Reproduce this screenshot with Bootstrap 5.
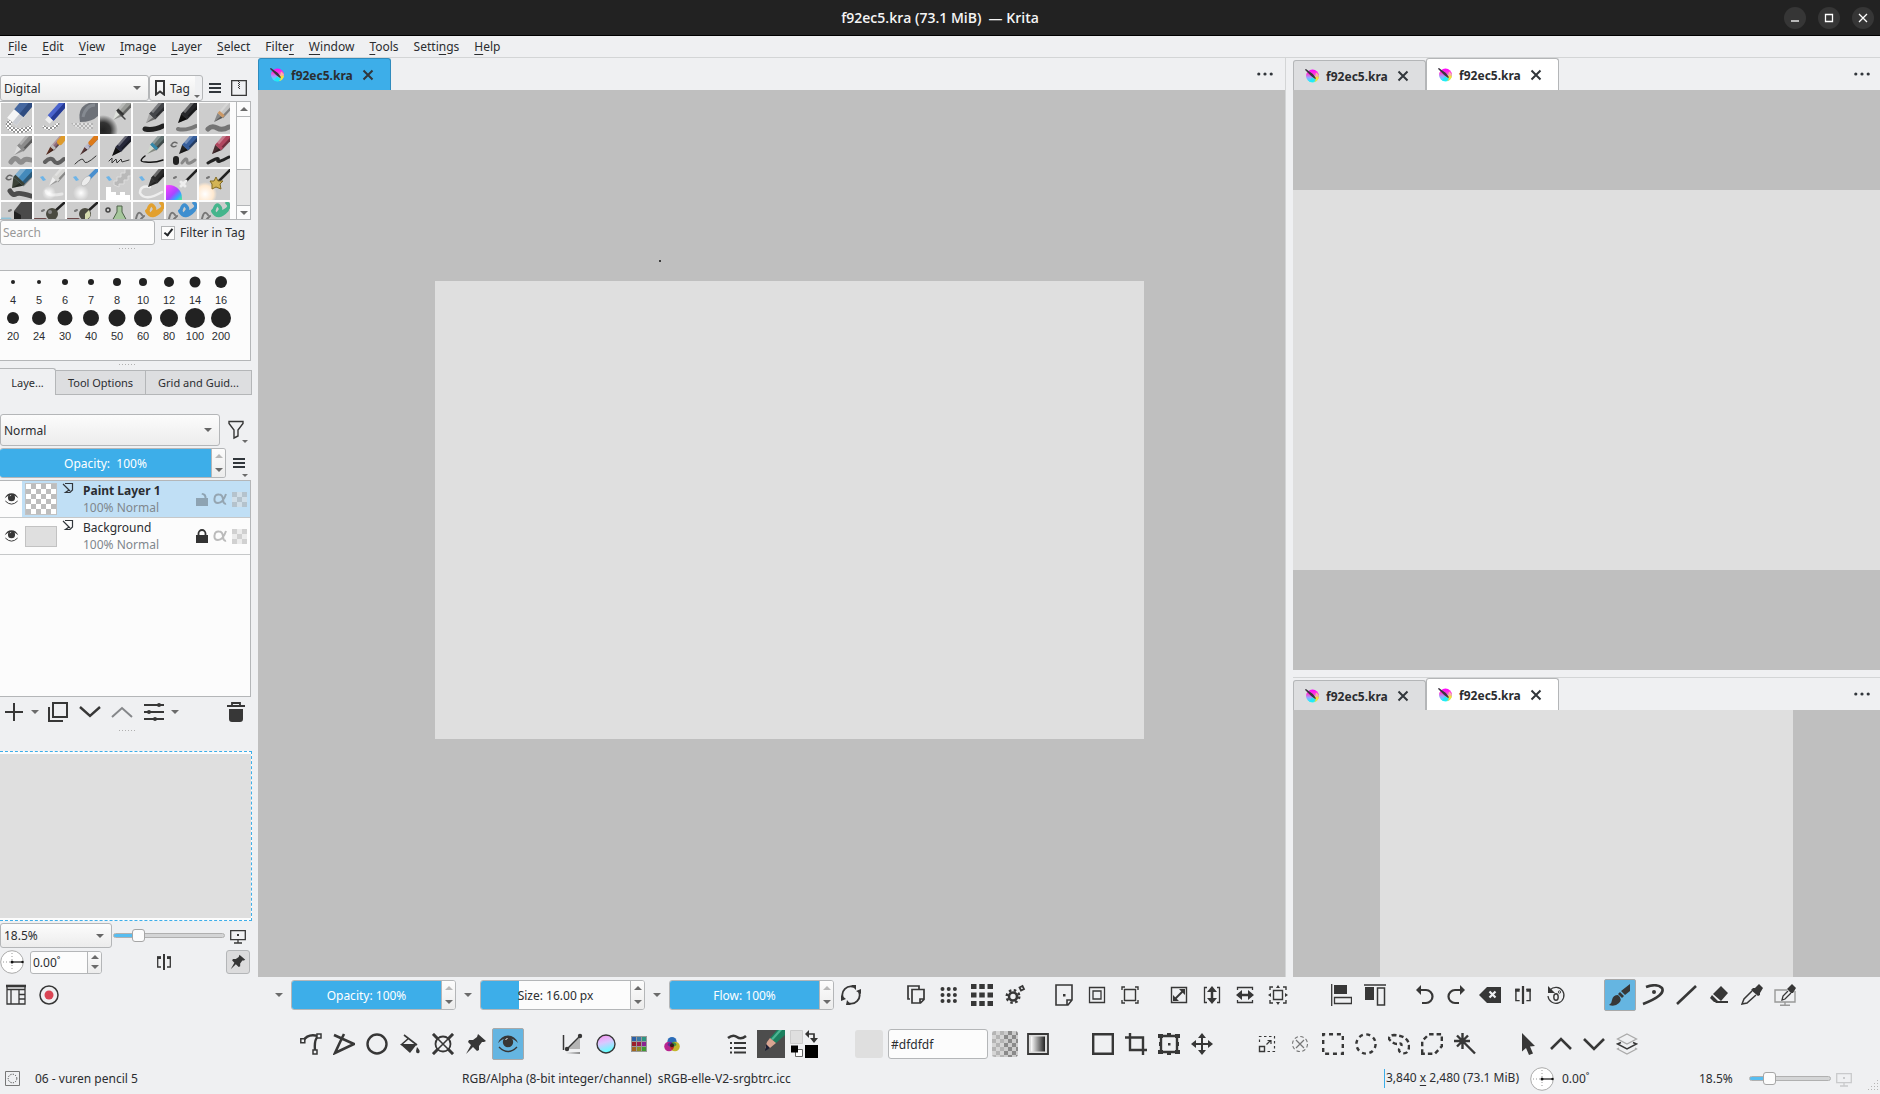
<!DOCTYPE html>
<html lang="en">
<head>
<meta charset="utf-8">
<meta name="viewport" content="width=device-width, initial-scale=1">
<title>f92ec5.kra (73.1 MiB) — Krita</title>
<link href="https://cdn.jsdelivr.net/npm/bootstrap@5.3.0/dist/css/bootstrap.min.css" rel="stylesheet">
<style>
:root{--ink:#373737;--line:#b4b6b8;--face:#eff0f2;--blue:#3daee9;--sel:#65b5e1}
body{font:12px/17px "Noto Sans",sans-serif;color:#2b2d30;background:var(--face);overflow:hidden}
svg{display:block;flex:none}
button,select,input{font:inherit;color:inherit}
.ico{width:22px;height:22px;fill:none;stroke:var(--ink);stroke-width:2}
.f{fill:var(--ink);stroke:none}
.plainbtn{background:none;border:0;padding:0;display:flex;align-items:center;justify-content:center;color:var(--ink)}
/* title and menu */
.titlebar{height:36px;background:#222;border-bottom:1px solid #000;color:#f4f4f4;display:grid;grid-template-columns:1fr auto 1fr}
.titlebar h1{font:600 14px/34px "Open Sans",sans-serif;margin:0;white-space:pre}
.winbtns{gap:12px;padding-right:6px}
.winbtn{width:22px;height:22px;border-radius:50%;background:#363636;border:0;padding:0}
.winbtn svg{stroke:#fff;fill:none;width:22px;height:22px;stroke-width:1.3}
.menubar{height:22px;border-bottom:1px solid #d3d5d6}
.menubar a{color:inherit;text-decoration:none;padding:0 8px;line-height:22px}
.menubar a+a{margin-left:-1px}
.menubar u,.statusbar u{text-underline-offset:3px}
/* controls */
.combo{height:26px;border:1px solid var(--line);border-radius:3px;padding:0 20px 0 3px;appearance:none;background:url("data:image/svg+xml,%3Csvg xmlns='http://www.w3.org/2000/svg' width='8' height='4'%3E%3Cpath d='M0 0h8L4 4z' fill='%23666'/%3E%3C/svg%3E") no-repeat right 7px center,linear-gradient(#fcfcfc,#ececec)}
.txt{border:1px solid var(--line);border-radius:3px;background:#fcfcfc;padding:0 2px;min-width:0}
.txt::placeholder{color:#999}
.spin{display:flex;border:1px solid var(--line);border-radius:3px;overflow:hidden;background:#fcfcfc}
.spin input{border:0;min-width:0;flex:1;background:none;padding:0}
.spin .filled{background:var(--blue);color:#fff;text-align:center}
.spin .sizefill{background:linear-gradient(90deg,var(--blue) 38px,#fcfcfc 38px);text-align:center}
.arrows{width:14px;flex:none;border-left:1px solid var(--line);background:linear-gradient(#fcfcfc,#ececec);display:flex;flex-direction:column}
.arrows button{flex:1;border:0;padding:0;background:none;display:flex;align-items:center;justify-content:center}
.arrows svg,.tri{width:8px;height:4px;fill:#6b6b6b}
.arrows .off svg{fill:#b8b8b8}
.tick{appearance:none;width:14px;height:14px;border:1px solid var(--line);background:#fcfcfc;margin:0;display:flex;align-items:center;justify-content:center}
.tick:checked::after{content:"";width:5px;height:9px;border:solid #232629;border-width:0 2px 2px 0;transform:rotate(38deg);margin-top:-2px}
.slide{appearance:none;height:13px;margin:0;background:none}
.slide::-webkit-slider-runnable-track{height:5px;border:1px solid #b0b0b0;border-radius:3px;background:linear-gradient(90deg,#57bdf0 24%,#d4d5d6 24%)}
.slide::-webkit-slider-thumb{appearance:none;width:13px;height:13px;margin-top:-5px;border:1px solid #a6a6a6;border-radius:3px;background:#fcfcfc}
.grip{height:3px;width:17px;margin:0 auto;background:radial-gradient(circle,#b0b0b0 1px,transparent 1px) 0 0/3px 3px}
/* left dock */
.dock{width:258px;flex:none;padding-right:6px}
.presetbox{width:251px;height:119px;border:1px solid var(--line);border-left:0;background:#fcfcfc;overflow:hidden}
.presets{display:grid;grid-template-columns:repeat(7,31px);gap:2px;padding:1px;flex:1;align-content:start}
.presets button{border:0;padding:0;width:31px;height:31px;background:#cdcdcd;overflow:hidden}
.presets svg{width:31px;height:31px;fill:none}
.vbar{width:14px;border-left:1px solid var(--line);background:#e6e6e6;display:flex;flex-direction:column}
.vbar button{height:14px;border:0;padding:0;background:#fcfcfc;display:flex;align-items:center;justify-content:center}
.vbar .knob{height:54px;border:solid var(--line);border-width:1px 0;background:#fcfcfc}
.vbar .down{border-top:1px solid var(--line)}
.sizes{width:251px;height:91px;border:1px solid var(--line);border-left:0;background:#fcfcfc;display:grid;grid-template-columns:repeat(9,26px);grid-auto-rows:36px;font:11px/12px "Liberation Sans",sans-serif;text-align:center}
.sizes button{border:0;background:none;padding:0;color:inherit;display:flex;flex-direction:column;align-items:center}
.sizes svg{width:22px;height:22px;fill:#222}
.docktabs{font-size:11px;height:27px;align-items:flex-end}
.docktabs button{height:25px;background:#dddee0;border:1px solid var(--line);border-left:0;padding:0;color:inherit}
.docktabs .on{height:27px;background:var(--face);border-left:0;border-bottom:0;border-radius:0 3px 0 0}
.layers{width:251px;border:1px solid var(--line);border-left:0;background:#fcfcfc}
.layer{height:37px;border-bottom:1px solid #c6c8c9}
.layer.on .rowbody{background:#c0dff5}
.eyecell{width:22px}
.thumbcell{width:32px;height:32px;border:1px solid #c2c2c2;background:repeating-conic-gradient(#bdbdbd 0 25%,#fff 0 50%) 0 0/10px 10px}
.thumbcell.plain{height:21px;background:#dfdfdf}
.soft{color:#7f878d}
.minicheck{width:15px;height:15px;background:repeating-conic-gradient(#aaa8 0 25%,#ddd8 0 50%) 5px 0/10px 10px}
.overview{width:252px;border:1px dashed var(--blue);border-left:0;padding:2px 0;background:#fcfcfc}
.overview div{background:#dfdfdf;height:100%}
.dial{width:24px;height:24px;fill:#fff;stroke:#aaa}
.pinbtn{width:24px;height:24px;border:1px solid var(--line);border-radius:3px;background:#dcdcdd}
/* document panes */
.docs{background:var(--face)}
.pane{min-width:0;min-height:0;display:flex;flex-direction:column}
.pane-a{flex:7 1 0}
.rightcol{flex:4 1 0;min-width:0;margin-left:7px}
.pane-a{border-right:1px solid #d3d5d6}
.pane-b{flex:43 1 0}.pane-c{flex:21 1 0}
.split{height:8px;border-bottom:1px solid #d3d5d6}
.tabrow{height:32px;display:flex;align-items:flex-end}
.doctab{width:133px;height:30px;background:#dddee0;border:1px solid var(--line);border-bottom:0;border-radius:3px 3px 0 0;padding:1px 0 0 10px;font-weight:700;display:flex;align-items:center}
.doctab.on{height:32px;background:#fff}
.doctab.focus{background:var(--blue);border-color:#2f8bbd}
.doctab span{margin-left:6px;width:71px}
.dots{margin-left:auto;width:36px;height:32px}
.canvas{background:#bfbfbf;flex:1;position:relative;min-height:0}
.sheet{background:#dfdfdf;height:100%}
.canvas-a{padding:191px 141px 238px 177px}
.canvas-b{padding:100px 0}
.canvas-c{padding:0 87px}
.speck{position:absolute;left:401px;top:170px;width:2px;height:2px;background:#3c3c3c}
/* bottom bars */
.tools{display:flex;align-items:center;height:36px}
.tb{width:33px;height:32px;flex:none}
.tb.on{width:32px;background:var(--sel);border:1px solid #a9a9a9;border-radius:2px}
.tool-arrow{width:24px;height:30px;flex:none}
.tools .spin{width:165px;height:30px;flex:none}
.g1{margin-left:16px}.g2{margin-left:32px}.g3{margin-left:30px}
.swatch{width:28px;height:28px;background:#dfdfdf;border:0;border-radius:3px}
.hexbox{width:100px;height:30px}
.statusbar{height:31px;display:flex;align-items:center}
.dimsbox{border-left:1px solid var(--blue);height:19px;padding-left:1px;width:146px;line-height:18px}
</style>
</head>
<body class="vh-100 d-flex flex-column">
<svg width="0" height="0" class="position-absolute">
<defs>
<linearGradient id="kr" x1="0" y1="0" x2="0" y2="1"><stop offset="0" stop-color="#f0f"/><stop offset=".35" stop-color="#ff3fd8"/><stop offset=".6" stop-color="#9fa0ff"/><stop offset="1" stop-color="#1ff"/></linearGradient>
<linearGradient id="wheel" x1="0" y1="0" x2=".3" y2="1"><stop offset="0" stop-color="#ff8cf0"/><stop offset=".5" stop-color="#d9c8ff"/><stop offset="1" stop-color="#6ff"/></linearGradient>
<linearGradient id="bw"><stop offset="0" stop-color="#fff"/><stop offset="1" stop-color="#222"/></linearGradient>
<linearGradient id="fadeb"><stop offset="0" stop-color="#222" stop-opacity="0"/><stop offset="1" stop-color="#222"/></linearGradient>
<linearGradient id="rain" x1="0" y1="0" x2="1" y2="1"><stop offset=".2" stop-color="#f4f"/><stop offset=".5" stop-color="#a4f"/><stop offset=".65" stop-color="#3af"/><stop offset=".78" stop-color="#5e8"/><stop offset=".9" stop-color="#fd4"/></linearGradient>
<radialGradient id="dark"><stop offset="0" stop-color="#222"/><stop offset=".5" stop-color="#333"/><stop offset="1" stop-color="#333" stop-opacity="0"/></radialGradient>
<radialGradient id="cream"><stop offset="0" stop-color="#fff"/><stop offset=".7" stop-color="#ffe9d0"/><stop offset="1" stop-color="#ffe9d0" stop-opacity="0"/></radialGradient>
<radialGradient id="mist"><stop offset="0" stop-color="#fff"/><stop offset="1" stop-color="#fff" stop-opacity="0"/></radialGradient>
<pattern id="chk" width="4" height="4" patternUnits="userSpaceOnUse"><rect width="4" height="4" fill="#fff"/><path d="M0 0h2v2h-2zM2 2h2v2h-2z" fill="#8f8f8f"/></pattern>
<pattern id="chk8" width="8" height="8" patternUnits="userSpaceOnUse"><rect width="8" height="8" fill="#ccc"/><path d="M0 0h4v4h-4zM4 4h4v4h-4z" fill="#8a8a8a"/></pattern>
<symbol id="kra" viewBox="0 0 16 16"><circle cx="8.500" cy="8" r="6.500" fill="url(#kr)"/><path d="M9 8 15 8.500A6.500 6.500 0 0 1 10.500 14z" fill="#f7e23a"/><path d="M12 4.500A6.500 6.500 0 0 1 15 8L11 9z" fill="#ffb0a0"/><path d="M5 13.500c3 1 6 .5 7-2l-4-2z" fill="#22e8f5"/><path d="M1.500 1.500l7 5 3 4-4-3z" fill="#3b3440" stroke="#3b3440" stroke-width="1.200"/></symbol>
<symbol id="cross" viewBox="0 0 12 12"><path d="M1.500 1.500l9 9M10.500 1.500l-9 9" stroke="#31363b" stroke-width="2"/></symbol>
<symbol id="up" viewBox="0 0 8 4"><path d="M0 4h8L4 0z"/></symbol>
<symbol id="dn" viewBox="0 0 8 4"><path d="M0 0h8L4 4z"/></symbol>
<symbol id="more" viewBox="0 0 16 4"><g fill="#31363b"><circle cx="1.800" cy="2" r="1.600"/><circle cx="8" cy="2" r="1.600"/><circle cx="14.200" cy="2" r="1.600"/></g></symbol>
<symbol id="burger" viewBox="0 0 12 12"><path d="M0 2h12M0 6h12M0 10h12" stroke="#31363b" stroke-width="2"/></symbol>
<symbol id="eye" viewBox="0 0 22 22"><path d="M1 10Q4 2.500 11 2.500T21 10Q16 5 11 5T1 10z" class="f"/><circle cx="11" cy="9" r="5.200" class="f"/><path d="M2 14q9 9 18 0" stroke-width="1.400"/><path d="M8.500 6.500l2-1" stroke="#fff" stroke-width="1"/></symbol>
<symbol id="mon" viewBox="0 0 16 16"><path d="M.7 2.700h14.600v9H.7zM8 12v3M4 15h8" stroke-width="1.300"/><path class="f" d="M7 6h2v2H7z"/></symbol>
<symbol id="pin" viewBox="0 0 22 22"><path class="f" d="M13 1l8 7-2 1-2 0-3 4 0 4-2 1-4-4-7 7 5-9-3-3 1-2 4 0 4-3z"/></symbol>
<symbol id="flip" viewBox="0 0 16 16"><path d="M5 3H1.700v10H5M11 3h3.300v10H11" stroke-width="1.300"/><path d="M8 0v16" stroke-width="2"/><path class="f" d="M11 2.400h4v2.600h-4zM1 2.400h4v2.600H1z"/></symbol>
<symbol id="dial" viewBox="0 0 24 24"><circle cx="12" cy="12" r="11.300"/><path d="M12 3v18M3 12h9" stroke-dasharray="1 2" stroke="#999"/><path d="M12 12h11" stroke="#111" stroke-width="1.200"/><circle cx="12" cy="12" r="1.500" fill="#111" stroke="none"/><circle cx="22.500" cy="12" r="1.200" fill="#111" stroke="none"/></symbol>
<symbol id="ltype" viewBox="0 0 12 12"><path d="M3 1.500h7.500V8L8 10.500H3.500L7 8M1 2l7 7" stroke="#31363b" stroke-width="1.200" fill="none"/></symbol>
</defs></svg>

<header class="titlebar align-items-center">
 <span></span><h1>f92ec5.kra (73.1 MiB)  — Krita</h1>
 <div class="winbtns d-flex justify-content-end">
  <button class="winbtn" aria-label="Minimize"><svg><path d="M7 14h8"/></svg></button>
  <button class="winbtn" aria-label="Maximize"><svg><path d="M7.500 7.500h7v7h-7z"/></svg></button>
  <button class="winbtn" aria-label="Close"><svg><path d="M7 7l8 8M15 7l-8 8"/></svg></button>
 </div>
</header>
<nav class="menubar d-flex" aria-label="Menu">
 <a href="#"><u>F</u>ile</a><a href="#"><u>E</u>dit</a><a href="#"><u>V</u>iew</a><a href="#"><u>I</u>mage</a><a href="#"><u>L</u>ayer</a><a href="#"><u>S</u>elect</a><a href="#">Filte<u>r</u></a><a href="#"><u>W</u>indow</a><a href="#"><u>T</u>ools</a><a href="#">Setti<u>n</u>gs</a><a href="#"><u>H</u>elp</a>
</nav>

<main class="d-flex flex-grow-1" style="min-height:0">
<aside class="dock d-flex flex-column">
 <div class="d-flex align-items-center" style="padding-top:17px">
  <select class="combo" style="width:149px" aria-label="Brush tag"><option>Digital</option></select>
  <button class="combo d-flex align-items-center position-relative" style="width:54px;padding:0 5px;background-image:linear-gradient(#fcfcfc,#ececec)"><svg width="10" height="16" viewBox="0 0 10 16" fill="none" stroke="#373737" stroke-width="2"><path d="M1 1h8v13.500l-4-3-4 3z"/></svg><span style="margin-left:5px">Tag</span><svg class="position-absolute" style="right:2px;bottom:2px" width="6" height="3" fill="#6b6b6b"><path d="M0 0h6L3 3z"/></svg></button>
  <button class="plainbtn" style="width:24px" aria-label="View options"><svg width="12" height="12"><use href="#burger"/></svg></button>
  <button class="plainbtn" style="margin-left:4px" aria-label="Storage"><svg width="16" height="16" fill="none" stroke="#373737" stroke-width="1.300"><path d="M.7.700h14.600v14.600H.7z"/><path d="M7.500 1v8M8.500 2v8" stroke-dasharray="1 1" stroke-width="1"/></svg></button>
 </div>
 <div class="presetbox d-flex">
  <div class="presets" id="presets"></div>
  <div class="vbar"><button aria-label="Scroll up"><svg class="tri"><use href="#up"/></svg></button><span class="knob"></span><span class="flex-grow-1"></span><button class="down" aria-label="Scroll down"><svg class="tri"><use href="#dn"/></svg></button></div>
 </div>
 <div class="d-flex align-items-center">
  <input class="txt" style="width:155px;height:25px" placeholder="Search" aria-label="Search">
  <input type="checkbox" class="tick" style="margin-left:6px" id="fit" checked><label for="fit" style="margin-left:5px">Filter in Tag</label>
 </div>
 <div class="grip" style="margin-top:2px"></div>
 <div class="sizes" id="sizes" style="margin-top:20px"></div>
 <div class="grip" style="margin-top:2px"></div>
 <div class="docktabs d-flex" style="margin-top:2px" role="tablist">
  <button class="on" style="width:56px" role="tab">Laye...</button><button style="width:90px" role="tab">Tool Options</button><button style="width:106px" role="tab">Grid and Guid...</button>
 </div>
 <div class="d-flex align-items-center" style="margin-top:19px">
  <select class="combo" style="width:220px;height:32px" aria-label="Blending mode"><option>Normal</option></select>
  <button class="plainbtn position-relative" style="width:32px;height:30px" aria-label="Filter layers"><svg width="16" height="20" fill="none" stroke="#373737" stroke-width="1.400"><path d="M1 1.500h14v2L10 10v6l-4 2v-8L1 3.500z"/></svg><svg class="position-absolute" style="right:4px;bottom:2px" width="6" height="3" fill="#6b6b6b"><path d="M0 0h6L3 3z"/></svg></button>
 </div>
 <div class="d-flex align-items-center" style="margin-top:2px">
  <div class="spin" style="width:226px;height:30px;border-left:0"><input class="filled" value="Opacity:  100%" aria-label="Layer opacity"><div class="arrows"><button class="off" aria-label="Up"><svg><use href="#up"/></svg></button><button aria-label="Down"><svg><use href="#dn"/></svg></button></div></div>
  <button class="plainbtn position-relative" style="width:26px;height:30px" aria-label="Layer menu"><svg width="12" height="12"><use href="#burger"/></svg><svg class="position-absolute" style="right:4px;bottom:1px" width="6" height="3" fill="#6b6b6b"><path d="M0 0h6L3 3z"/></svg></button>
 </div>
 <div class="layers flex-grow-1" style="margin-top:2px">
  <div class="layer on d-flex">
   <button class="plainbtn eyecell" aria-label="Toggle visibility"><svg class="ico" style="width:15px;height:16px"><use href="#eye"/></svg></button>
   <div class="rowbody d-flex flex-grow-1 align-items-center">
    <span class="thumbcell" style="margin-left:3px"></span>
    <svg width="12" height="12" class="align-self-start" style="margin:1px 0 0 5px"><use href="#ltype"/></svg>
    <div style="margin-left:9px;width:112px"><b>Paint Layer 1</b><br><span class="soft">100% Normal</span></div>
    <svg width="14" height="14"><path d="M1 6h12v8H1zM7 1q5 0 4.500 6h-2Q10 3 6.500 2.500z" fill="#8ea3b2"/></svg>
    <svg width="15" height="12" style="margin-left:4px" fill="none" stroke="#95a5b1" stroke-width="2"><path d="M13 1q-3 9-8 9-4 0-3.500-4.500T6 1.500q3.500 0 4 5t3 4"/></svg>
    <span class="minicheck" style="margin-left:4px"></span>
   </div>
  </div>
  <div class="layer d-flex">
   <button class="plainbtn eyecell" aria-label="Toggle visibility"><svg class="ico" style="width:15px;height:16px"><use href="#eye"/></svg></button>
   <div class="rowbody d-flex flex-grow-1 align-items-center">
    <span class="thumbcell plain" style="margin-left:3px"></span>
    <svg width="12" height="12" class="align-self-start" style="margin:1px 0 0 5px"><use href="#ltype"/></svg>
    <div style="margin-left:9px;width:112px">Background<br><span class="soft">100% Normal</span></div>
    <svg width="14" height="14"><path d="M1 6h12v8H1z" fill="#333"/><path d="M3.500 7V4.500a3.500 3.500 0 0 1 7 0V7" fill="none" stroke="#333" stroke-width="1.800"/></svg>
    <svg width="15" height="12" style="margin-left:4px" fill="none" stroke="#bbb" stroke-width="2"><path d="M13 1q-3 9-8 9-4 0-3.500-4.500T6 1.500q3.500 0 4 5t3 4"/></svg>
    <span class="minicheck" style="margin-left:4px"></span>
   </div>
  </div>
 </div>
 <div class="d-flex align-items-center" style="height:32px;padding:0 0 2px 3px">
  <button class="plainbtn" aria-label="Add layer"><svg class="ico"><path d="M11 2v18M2 11h18"/></svg></button>
  <button class="plainbtn" style="width:20px" aria-label="Add options"><svg class="tri"><use href="#dn"/></svg></button>
  <button class="plainbtn" style="width:26px" aria-label="Duplicate layer"><svg class="ico"><path d="M6 2h14v14H6z"/><path d="M2 6v14h14" stroke-width="2"/></svg></button>
  <button class="plainbtn" style="width:32px;margin-left:3px" aria-label="Move down"><svg class="ico"><path d="M1 6l10 9L21 6" stroke-width="2.400"/></svg></button>
  <button class="plainbtn" style="width:32px" aria-label="Move up"><svg class="ico" style="stroke:#85878a"><path d="M1 16l10-9 10 9"/></svg></button>
  <button class="plainbtn" style="width:32px" aria-label="Layer properties"><svg class="ico"><path d="M1 4h20M1 11h20M1 18h20"/><circle cx="16" cy="4" r="2" class="f"/><circle cx="6" cy="11" r="2" class="f"/><circle cx="12" cy="18" r="2" class="f"/></svg></button>
  <button class="plainbtn" style="width:10px" aria-label="More"><svg class="tri"><use href="#dn"/></svg></button>
  <button class="plainbtn ms-auto" style="margin-right:5px" aria-label="Delete layer"><svg class="ico"><path class="f" d="M2 4h18v2H2zM4 8h14v10q0 3-3 3H7q-3 0-3-3z"/><path d="M7 4V2h8v2" stroke-width="1.800"/></svg></button>
 </div>
 <div class="grip"></div>
 <div class="overview" style="height:170px;margin-top:19px"><div></div></div>
 <div class="d-flex align-items-center" style="margin-top:2px">
  <select class="combo" style="width:112px;height:25px" aria-label="Zoom"><option>18.5%</option></select>
  <input type="range" class="slide" style="width:112px;margin-left:1px" value="19" aria-label="Zoom slider">
  <svg class="ico" style="width:16px;height:16px;margin-left:5px"><use href="#mon"/></svg>
 </div>
 <div class="d-flex align-items-center" style="margin:2px 0 3px">
  <svg class="dial"><use href="#dial"/></svg>
  <div class="spin" style="width:72px;height:23px;margin-left:6px"><input value="0.00˚" style="padding-left:2px" aria-label="Rotation"><div class="arrows"><button aria-label="Up"><svg><use href="#up"/></svg></button><button aria-label="Down"><svg><use href="#dn"/></svg></button></div></div>
  <button class="plainbtn" style="margin-left:54px" aria-label="Mirror view"><svg class="ico" style="width:16px;height:16px"><use href="#flip"/></svg></button>
  <button class="plainbtn pinbtn ms-auto" style="margin-right:2px" aria-label="Pin"><svg class="ico" style="width:16px;height:16px"><use href="#pin"/></svg></button>
 </div>
</aside>

<section class="docs d-flex flex-grow-1">
 <div class="pane pane-a">
  <div class="tabrow"><div class="doctab on focus"><svg width="16" height="16"><use href="#kra"/></svg><span>f92ec5.kra</span><button class="plainbtn" aria-label="Close tab"><svg width="12" height="12"><use href="#cross"/></svg></button></div><button class="plainbtn dots" style="margin-right:2px" aria-label="More"><svg width="16" height="4"><use href="#more"/></svg></button></div>
  <div class="canvas canvas-a"><div class="sheet"></div><i class="speck"></i></div>
 </div>
 <div class="rightcol d-flex flex-column">
  <div class="pane pane-b">
   <div class="tabrow"><div class="doctab"><svg width="16" height="16"><use href="#kra"/></svg><span>f92ec5.kra</span><button class="plainbtn" aria-label="Close tab"><svg width="12" height="12"><use href="#cross"/></svg></button></div><div class="doctab on"><svg width="16" height="16"><use href="#kra"/></svg><span>f92ec5.kra</span><button class="plainbtn" aria-label="Close tab"><svg width="12" height="12"><use href="#cross"/></svg></button></div><button class="plainbtn dots" aria-label="More"><svg width="16" height="4"><use href="#more"/></svg></button></div>
   <div class="canvas canvas-b"><div class="sheet"></div></div>
  </div>
  <div class="split"></div>
  <div class="pane pane-c">
   <div class="tabrow"><div class="doctab"><svg width="16" height="16"><use href="#kra"/></svg><span>f92ec5.kra</span><button class="plainbtn" aria-label="Close tab"><svg width="12" height="12"><use href="#cross"/></svg></button></div><div class="doctab on"><svg width="16" height="16"><use href="#kra"/></svg><span>f92ec5.kra</span><button class="plainbtn" aria-label="Close tab"><svg width="12" height="12"><use href="#cross"/></svg></button></div><button class="plainbtn dots" aria-label="More"><svg width="16" height="4"><use href="#more"/></svg></button></div>
   <div class="canvas canvas-c"><div class="sheet"></div></div>
  </div>
 </div>
</section>
</main>

<footer>
<div class="tools">
 <button class="plainbtn tb" style="width:32px" aria-label="Workspaces"><svg class="ico"><path d="M2 2h18v18H2z" stroke-width="1.300"/><path d="M1 2h20" stroke-width="2.600"/><path d="M2 5.500h18M6 6v14M14 6v14M14 10.500h6M14 15h6" stroke-width="1.300"/></svg></button>
 <button class="plainbtn tb" aria-label="Record"><svg class="ico"><circle cx="11" cy="11" r="9" stroke-width="1.500"/><circle cx="11" cy="11" r="4.500" fill="#da4453" stroke="none"/></svg></button>
 <button class="plainbtn tool-arrow" style="margin-left:202px" aria-label="Options"><svg class="tri"><use href="#dn"/></svg></button>
 <div class="spin"><input class="filled" value="Opacity: 100%" aria-label="Opacity"><div class="arrows"><button class="off" aria-label="Up"><svg><use href="#up"/></svg></button><button aria-label="Down"><svg><use href="#dn"/></svg></button></div></div>
 <button class="plainbtn tool-arrow" aria-label="Options"><svg class="tri"><use href="#dn"/></svg></button>
 <div class="spin"><input class="sizefill" value="Size: 16.00 px" aria-label="Size"><div class="arrows"><button aria-label="Up"><svg><use href="#up"/></svg></button><button aria-label="Down"><svg><use href="#dn"/></svg></button></div></div>
 <button class="plainbtn tool-arrow" aria-label="Options"><svg class="tri"><use href="#dn"/></svg></button>
 <div class="spin"><input class="filled" value="Flow: 100%" aria-label="Flow"><div class="arrows"><button class="off" aria-label="Up"><svg><use href="#up"/></svg></button><button aria-label="Down"><svg><use href="#dn"/></svg></button></div></div>
 <button class="plainbtn tb" aria-label="Reload preset"><svg class="ico"><path d="M3 14A8.500 8.500 0 0 1 14 3M19 8A8.500 8.500 0 0 1 8 19" stroke-width="1.800"/><path class="f" d="M11 1l5 0 0 5zM1 11l5 4-5 2zM11 21l-5 0 1-5zM21 10l-5-3 5-2z"/></svg></button>

 <button class="plainbtn tb g2" aria-label="Clone"><svg class="ico"><path d="M5 15H3V2h11v3" stroke-width="1.700"/><path d="M7 5.500h12v10L15.500 19H7zM15 19v-4h4" stroke-width="1.700"/></svg></button>
 <button class="plainbtn tb" aria-label="Small grid"><svg class="ico"><path d="M4.500 5h14M4.500 11h14M4.500 17h14" stroke-dasharray="0 6.200" stroke-linecap="round" stroke-width="4"/></svg></button>
 <button class="plainbtn tb" aria-label="Large grid"><svg class="ico"><path d="M0 2.500h22M0 11h22M0 19.500h22" stroke-width="5" stroke-dasharray="5.500 2.750"/></svg></button>
 <button class="plainbtn tb" aria-label="Configure"><svg class="ico"><circle cx="9" cy="12.500" r="4" stroke-width="2.600"/><circle cx="9" cy="12.500" r="6.300" stroke-width="2.400" stroke-dasharray="2.500 2.450"/><path d="M15.500 3.500l3-1.500 1.500 3-3 1.500z" stroke-width="1.800"/></svg></button>

 <button class="plainbtn tb g1" aria-label="New document"><svg class="ico"><path d="M3 1h16v15l-4 5H3zM14 21v-5h5" stroke-width="1.600"/><path class="f" d="M10 10h2.500v2.500H10z"/></svg></button>
 <button class="plainbtn tb" aria-label="Canvas only"><svg class="ico"><path d="M3.500 3.500h15v15h-15zM7 7h8v8H7z" stroke-width="1.300"/></svg></button>
 <button class="plainbtn tb" aria-label="Fit page"><svg class="ico"><path d="M5.500 5.500h11v11h-11zM3 6V3h3M16 3h3v3M19 16v3h-3M6 19H3v-3" stroke-width="1.400"/></svg></button>

 <button class="plainbtn tb g1" aria-label="Scale"><svg class="ico"><path d="M3.500 3.500h15v15h-15z" stroke-width="1.400"/><path d="M7 15l8-8"/><path class="f" d="M11 5h6v6zM5 11v6h6z"/></svg></button>
 <button class="plainbtn tb" aria-label="Fit height"><svg class="ico"><path d="M6 3.500H3.500v15H6M16 3.500h2.500v15H16" stroke-width="1.300"/><path d="M11 6v10" stroke-width="2.500"/><path class="f" d="M11 2l5 6H6zM11 20l5-6H6z"/></svg></button>
 <button class="plainbtn tb" aria-label="Fit width"><svg class="ico"><path d="M3.500 6V3.500h15V6M3.500 16v2.500h15V16" stroke-width="1.300"/><path d="M6 11h10" stroke-width="2.500"/><path class="f" d="M2 11l6-5v10zM20 11l-6-5v10z"/></svg></button>
 <button class="plainbtn tb" aria-label="Fit canvas"><svg class="ico"><path d="M6.500 6.500h9v9h-9zM3 6V3h3M16 3h3v3M19 16v3h-3M6 19H3v-3" stroke-width="1.400"/><path class="f" d="M9 4h4l-2-3zM9 18h4l-2 3zM4 9v4l-3-2zM18 9v4l3-2z"/></svg></button>

 <button class="plainbtn tb g3" style="width:34px" aria-label="Align left"><svg class="ico"><path d="M1.700 0v22" stroke-width="1.300"/><path class="f" d="M4 1h13v9H4z"/><path d="M4.500 13.500h17v6h-17z" stroke-width="1.300"/></svg></button>
 <button class="plainbtn tb" aria-label="Align top"><svg class="ico"><path d="M0 1h22" stroke-width="1.500"/><path class="f" d="M1 3h9v13H1z"/><path d="M13.500 4h7v17h-7z" stroke-width="1.500"/></svg></button>

 <button class="plainbtn tb g1" aria-label="Undo"><svg class="ico"><path d="M5 6h8a6.500 6.500 0 0 1 0 13H9" stroke-width="2.200"/><path class="f" d="M8 1L3 6l5 5z"/></svg></button>
 <button class="plainbtn tb" aria-label="Redo"><svg class="ico"><path d="M17 6H9a6.500 6.500 0 0 0 0 13h4" stroke-width="2.200"/><path class="f" d="M14 1l5 5-5 5z"/></svg></button>
 <button class="plainbtn tb" aria-label="Clear"><svg class="ico"><path class="f" d="M8 3h14v16H8L0 11z"/><path d="M10.500 7.500l6 6M16.500 7.500l-6 6" stroke="#eff0f2" stroke-width="2.200"/></svg></button>
 <button class="plainbtn tb" aria-label="Mirror"><svg class="ico" style="width:18px;height:18px"><use href="#flip"/></svg></button>
 <button class="plainbtn tb" aria-label="Reset rotation"><svg class="ico"><path d="M5 6a8 8 0 1 1-2 6" stroke-width="1.200"/><path class="f" d="M3 2v7h7z"/><ellipse cx="11" cy="13" rx="2.200" ry="3.200" stroke-width="1.400"/><circle cx="14.500" cy="8" r="1.200" stroke-width=".9"/></svg></button>

 <button class="plainbtn tb on g2" aria-label="Freehand brush"><svg class="ico"><path class="f" d="M21 0v7l-5 4-4-4zM11 8l4 4-2 2-4-4zM9 11q5 4 1 8t-10 2q3-2 3-5 1-5 6-5z"/></svg></button>
 <button class="plainbtn tb" aria-label="Dynamic brush"><svg class="ico"><path d="M4 3Q15-1 20 4q4 7-19 16" stroke-width="2.600"/><circle cx="12" cy="8" r="2" class="f"/></svg></button>
 <button class="plainbtn tb" aria-label="Line"><svg class="ico"><path d="M2 20L21 2" stroke-width="2.600"/></svg></button>
 <button class="plainbtn tb" aria-label="Eraser"><svg class="ico"><path class="f" d="M13 2l7 7-7 8-8-7zM4 11l7 7H6l-4-4zM9 17h11v2H7z"/></svg></button>
 <button class="plainbtn tb" aria-label="Colour sampler"><svg class="ico"><path class="f" d="M12 4l2 0 4-4 4 4-3 5 0 2-2 1-7-6z"/><path d="M11 7L3 15l-2 5 5-1 9-8" stroke-width="1.500"/></svg></button>
 <button class="plainbtn tb" aria-label="Screen sampler"><svg class="ico"><path d="M13 6H1v12h20V7M11 18v3M6 21.300h10" stroke="#999" stroke-width="1.400"/><path class="f" d="M14 4l4-4 4 4-3 5-2 0-4-4z"/><path d="M14 7l-5 5-1 4 3-1 6-6" stroke-width="1.300"/></svg></button>
</div>

<div class="tools" style="height:38px;margin-top:12px;padding-left:294px">
 <button class="plainbtn tb" aria-label="Bezier curve"><svg class="ico"><path d="M3 8Q8 0 18 3q-4 4-3 14" stroke-width="2.400"/><path d="M.8 5.800h4v4h-4zM17 1h4v4h-4zM13 17h4v4h-4z" fill="#eff0f2" stroke-width="1.500"/></svg></button>
 <button class="plainbtn tb" aria-label="Polyline"><svg class="ico"><path d="M11 1Q7 9 2 20L21 11 1 2" stroke-width="2.600"/></svg></button>
 <button class="plainbtn tb" aria-label="Ellipse"><svg class="ico"><circle cx="11" cy="11" r="9.500" stroke-width="2.400"/></svg></button>
 <button class="plainbtn tb" aria-label="Fill"><svg class="ico"><path class="f" d="M1 11h17l-7 9zM18 14q4 4 2 6-3 1-3-2z"/><path d="M5 2l13 10M10 5l-8 7" stroke-width="1.600"/></svg></button>
 <button class="plainbtn tb" aria-label="Enclose and fill"><svg class="ico"><circle cx="11" cy="11" r="7.500" stroke-width="1.800"/><path d="M1 1l20 20M21 1L1 21" stroke-width="1.600"/><path d="M1 1l5 5M21 1l-5 5M1 21l5-5M21 21l-5-5" stroke-width="3"/></svg></button>
 <button class="plainbtn tb" aria-label="Pin"><svg class="ico"><use href="#pin"/></svg></button>
 <button class="plainbtn tb on" aria-label="Reference view"><svg class="ico"><use href="#eye"/></svg></button>

 <button class="plainbtn tb g2" aria-label="Pressure"><svg class="ico"><path d="M5 16L18 4v12z" fill="#b5b5b5" stroke="none"/><path d="M5 16L18 3" stroke-width="1.500"/><circle cx="5" cy="16" r="2.200" class="f"/><circle cx="18" cy="3" r="2.200" class="f"/><path d="M1.500 2v15" stroke-width="1.500"/><path d="M4 19.500h14.010l-.01 1H4z" fill="url(#fadeb)" stroke="none"/></svg></button>
 <button class="plainbtn tb" aria-label="Colour wheel"><svg class="ico"><circle cx="11" cy="11" r="9" fill="url(#wheel)" stroke-width="1.400"/></svg></button>
 <button class="plainbtn tb" aria-label="Palette"><svg class="ico"><g stroke="none"><path d="M3 3h16v16H3z" fill="#999"/><path d="M4 4h4v4H4z" fill="#2b5fa8"/><path d="M9 4h4v4H9z" fill="#3a78a5"/><path d="M14 4h4v4h-4z" fill="#2c9482"/><path d="M4 9h4v4H4z" fill="#9c1f28"/><path d="M9 9h4v4H9z" fill="#9b1d4c"/><path d="M14 9h4v4h-4z" fill="#8a2292"/><path d="M4 14h4v4H4z" fill="#a5641f"/><path d="M9 14h4v4H9z" fill="#8b8b22"/><path d="M14 14h4v4h-4z" fill="#3f9c33"/></g></svg></button>
 <button class="plainbtn tb" aria-label="Colour mix"><svg class="ico"><g stroke="none"><circle cx="11" cy="8.500" r="4.600" fill="#2b6cb8"/><circle cx="8" cy="13.500" r="4.800" fill="#b8258f"/><circle cx="14" cy="13.500" r="4.800" fill="#c5b52b"/><path d="M11 9q4 0 4.500 3l-4.500 3z" fill="#3f8f46"/><path d="M11 9q-4 0-4.500 3l4.500 3z" fill="#5a2c9a"/><path d="M11 10.500l2 4-2 3-2-3z" fill="#c02a2a"/><circle cx="11" cy="12.300" r="2" fill="#3a1c1c"/></g></svg></button>

 <button class="plainbtn tb g2" aria-label="Brush settings"><svg class="ico"><path d="M2 5q5-4 9-1t9-1" stroke-width="2.600"/><path d="M8 10h12M8 15h12M8 19.500h12" stroke-width="1.800"/><path d="M4 10h2M4 15h2M4 19.500h2" stroke-width="2"/></svg></button>
 <button class="plainbtn tb" style="width:36px" aria-label="Current preset"><svg width="28" height="28"><path fill="#4d4d4d" d="M0 0h28v28H0z"/><path d="M20 0h8v5L19 13l-6-5z" fill="#1c8060"/><path d="M22 0h3L16 10l-2-1z" fill="#4db593"/><path d="M13 8l6 5-6 5-4 1-1-1 2-6z" fill="#d9a592"/><path d="M9 14l4 4-5 3z" fill="#1c2034"/></svg></button>
 <button class="plainbtn" style="width:30px" aria-label="Foreground and background colours"><svg width="28" height="28"><path fill="#dfdfdf" stroke="#ccc" d="M.5.500h12v13H.5z"/><path fill="#000" d="M15 15h13v13H15z"/><path d="M5.500 19.500h7v7h-7z" fill="#fff" stroke="#666"/><path d="M1 15.500h7v7H1z" fill="#000"/><path d="M18 4h6v7" fill="none" stroke="#333" stroke-width="1.700"/><path d="M19 0v8l-4-4zM20 8h8l-4 5z" fill="#333"/></svg></button>

 <button class="swatch" style="margin-left:36px" aria-label="Colour"></button>
 <input class="txt hexbox" style="margin-left:5px" value="#dfdfdf" aria-label="Hex colour">
 <button class="plainbtn tb" aria-label="Pattern"><svg width="26" height="26"><rect width="26" height="26" rx="3" fill="url(#chk8)"/><path d="M0 0h12v26H0z" fill="#ddd" opacity=".5"/></svg></button>
 <button class="plainbtn tb" aria-label="Gradient"><svg class="ico"><path d="M1 1h20v20H1z" stroke-width="1.800" fill="#ddd"/><path d="M4 3.500h14v15H4z" fill="url(#bw)" stroke="none"/></svg></button>

 <button class="plainbtn tb g2" aria-label="Rectangle"><svg class="ico"><path d="M1.200 1.200h19.600v19.600H1.200z" stroke-width="2.400"/></svg></button>
 <button class="plainbtn tb" aria-label="Crop"><svg class="ico"><path d="M5 0v17h17M0 4.500h18V22" stroke-width="2.400"/></svg></button>
 <button class="plainbtn tb" aria-label="Transform"><svg class="ico"><path d="M3 3h16v16H3z" stroke-width="2.400"/><path class="f" d="M0 1h5v4H0zM9 0h4v4H9zM17 1h5v4h-5zM0 17h5v4H0zM9 18h4v4H9zM17 17h5v4h-5zM1 9h3v4H1zM18 9h3v4h-3zM10 10h2.500v2.500H10z"/></svg></button>
 <button class="plainbtn tb" aria-label="Move"><svg class="ico"><path d="M11 3v16M3 11h16"/><path class="f" d="M11 0l4 5H7zM11 22l4-5H7zM0 11l5-4v8zM22 11l-5-4v8z"/></svg></button>

 <button class="plainbtn tb g2" aria-label="Scale selection"><svg class="ico"><path d="M3.500 9V3.500h15v15H10" stroke-width="1.200" stroke-dasharray="2.500 2.500"/><path d="M3.500 13.500h5v5h-5z" stroke-width="1.400"/><path d="M10.500 11.500l4-4M11.500 7.500h3.500V11" stroke-width="1.200"/></svg></button>
 <button class="plainbtn tb" aria-label="Deselect"><svg class="ico" style="opacity:.65"><circle cx="11" cy="11" r="7.500" stroke-width="1.100" stroke-dasharray="3.500 2.400"/><path d="M7 7l8 8M15 7l-8 8" stroke-width="1.200"/></svg></button>
 <button class="plainbtn tb" aria-label="Rectangular selection"><svg class="ico"><path d="M1.200 1.200h19.600v19.600H1.200z" stroke-width="2.400" stroke-dasharray="4 3.840" stroke-dashoffset="2"/></svg></button>
 <button class="plainbtn tb" aria-label="Elliptical selection"><svg class="ico"><circle cx="11" cy="11" r="9.600" stroke-width="2.400" stroke-dasharray="4 3.540"/></svg></button>
 <button class="plainbtn tb" aria-label="Freehand selection"><svg class="ico"><path d="M9 11q-4 0-8-5 0-4 5-4 15 1 15 11 0 9-8 7-4-3 0-6 2-5-4-3" stroke-width="2.400" stroke-dasharray="4.500 2.800"/></svg></button>
 <button class="plainbtn tb" aria-label="Polygonal selection"><svg class="ico"><path d="M1.200 20.800V8L8 1.200h12.800v12l-7 7.600z" stroke-width="2.400" stroke-dasharray="4.500 3"/></svg></button>
 <button class="plainbtn tb" aria-label="Contiguous selection"><svg class="ico"><path d="M8.500 0v16M0 8h16M3 2.500l18 18M14 2.500l-11 11" stroke-width="2.400"/></svg></button>

 <button class="plainbtn tb g3" aria-label="Select shapes"><svg class="ico"><path class="f" d="M5 0l13 13-5 .5 3 7-4 1.500-3-7-4 3.500z"/></svg></button>
 <button class="plainbtn tb" aria-label="Previous"><svg class="ico"><path d="M1 16L11 6l10 10" stroke-width="2.600"/></svg></button>
 <button class="plainbtn tb" aria-label="Next"><svg class="ico"><path d="M1 6l10 10L21 6" stroke-width="2.600"/></svg></button>
 <button class="plainbtn tb" aria-label="Layers"><svg class="ico"><path d="M11 1l9.500 5L11 11 1.500 6zM3 15l-1.500 1L11 21l9.500-5-1.500-1" stroke="#aaa" stroke-width="1.300"/><path d="M5 9.500L1.500 11 11 16l9.500-5L17 9.500" stroke-width="1.500"/></svg></button>
</div>

<div class="statusbar">
 <button class="plainbtn" style="margin-left:5px" aria-label="Selection mode"><svg width="15" height="15" fill="none" stroke="#777"><path d="M.5.500h14v14H.5z"/><circle cx="7.500" cy="7.500" r="4.300" stroke-dasharray="1.200 1.300" stroke="#444"/></svg></button>
 <span style="margin-left:15px;width:427px">06 - vuren pencil 5</span>
 <span style="white-space:pre">RGB/Alpha (8-bit integer/channel)  sRGB-elle-V2-srgbtrc.icc</span>
 <div class="ms-auto d-flex align-items-center">
  <span class="dimsbox">3,840 <u>x</u> 2,480 (73.1 MiB)</span>
  <svg class="dial"><use href="#dial"/></svg><span style="margin-left:8px;width:137px">0.00˚</span>
  <span style="width:50px">18.5%</span>
  <input type="range" class="slide" style="width:82px" value="19" aria-label="Zoom">
  <svg class="ico" style="width:16px;height:16px;margin-left:5px;opacity:.2"><use href="#mon"/></svg>
  <svg width="12" height="12" style="margin-left:16px" class="align-self-end"><path d="M9.500 1v11M6.500 4v8M3.500 7v5M.5 10v2" stroke="#b5b5b5" stroke-dasharray="1 2"/></svg>
 </div>
</div>
</footer>

<script src="https://cdn.jsdelivr.net/npm/bootstrap@5.3.0/dist/js/bootstrap.bundle.min.js"></script>
<script>
// A tool drawn from its tip (x, y) up to the top right corner
const pen = (x, y, w, body, tip, band = body) => `<g transform="translate(${x} ${y}) rotate(-47)">
<path d="M9 ${-w / 2}L36 ${-w / 2 - 1}v${w + 2}L9 ${w / 2}z" fill="${body}"/><path d="M9 ${-w / 2}L36 ${-w / 2 - 1}v${w / 3}L9 ${-w / 6}z" fill="#fff" opacity=".3"/>
<path d="M9 ${w / 4}h32v${w / 3}H9z" fill="#000" opacity=".35"/>
<path d="M0 0L9 ${-w / 2}v${w}z" fill="${tip}"/><path d="M0 0L9 ${w / 6}v${w / 3}z" fill="#000" opacity=".35"/><path d="M9 ${-w / 2}h3v${w}H9z" fill="${band}"/></g>`;
const line = (d, c, w, o = 1) => `<path d="${d}" stroke="${c}" stroke-width="${w}" opacity="${o}" stroke-linecap="round"/>`;
const arc = 'M12 26q8 2 18-3', wave = 'M10 26q4-6 7-2t5 1 8-1', thin = 'M8 28q8-8 9-3t12-5';
const drop = `<path d="M6 8l3-1 3 4-3 1z" fill="#6db4e8"/>`, tiny = line('M8 9l2-1', '#777', 2);
const turn = line('M6 8q2-3 5-1M10 10q-3 2-5-1', '#666', 1.5);
const palette = c => line('M3 17q2-10 6-4M8 17l3-3', '#777', 2) + line('M15 8q2-7 5-4t0 6 5-1 3-8', c, 3.5) + line('M14 9q5 9 14-1', c, 4);
const art = [
 line('M9 19q-5 5 4 8 8 2 17-2', 'url(#chk)', 5) + `<g transform="translate(12 17) rotate(-50)"><path d="M-2-6h11V6H-2z" fill="#f6f6f6"/><path d="M-2 1h11v5H-2z" fill="#c9ccd2"/><path d="M9-6h30V6H9z" fill="#4567a0"/><path d="M9 1h30v5H9z" fill="#2f4c80"/></g>`,
 line('M10 24q8 4 14-3', 'url(#chk)', 3) + `<g transform="translate(14 18) rotate(-48)"><path d="M-1-3h5v6h-5z" fill="#eee"/><path d="M4-4h30v8H4z" fill="#4a63cc"/><path d="M4 0h30v4H4z" fill="#263b94"/></g>`,
 `<path d="M4 20q6 8 22 6v-6z" fill="url(#chk)" opacity=".4"/><path d="M13 19Q10 4 22 0h9v13q-6 6-18 6z" fill="#6d7178"/><path d="M16 14q3-12 12-12" stroke="#858a91" stroke-width="3"/>`,
 `<circle cx="3" cy="27" r="15" fill="url(#dark)"/>` + pen(13, 17, 8, '#9a9c98', '#dfe2dc', '#333') + line('M18 9l7 7', '#444', 1.5),
 line(arc, '#222', 5) + pen(13, 20, 8, '#44464a', '#aaa'),
 line(arc, '#555', 4, .7) + pen(12, 20, 8, '#26272a', '#111'),
 line('M9 26q4-4 9-1t12-1', '#555', 5, .75) + pen(15, 19, 7, '#c4c4c4', '#888', '#c96'),
 line(wave, '#777', 5, .75) + pen(13, 19, 8, '#8b8b8b', '#ddd'),
 line('M11 26q6-6 9-1t10-2', '#444', 4, .8) + pen(12, 19, 5, '#8c6a78', '#5b2e21', '#bbb') + line('M26 6l6-7', '#dd9a2b', 6),
 line(thin, '#333', 1) + pen(13, 19, 4, '#a4a0b8', '#5b3a3a', '#bbc') + line('M24 7l8-9', '#dd7a18', 5),
 line('M9 25l3-3 0 5 4-4 1 4 4-4 1 3 7-2', '#333', 1) + pen(12, 20, 7, '#26283a', '#111'),
 line('M12 20q-8 6 1 6 9 1 17-2', '#111', 1.500) + pen(14, 18, 8, '#60706f', '#cfd6cc', '#38a'),
 turn + line('M10 23v3', '#222', 6) + line('M16 27q5-7 5-2t8-1', '#888', 3) + pen(13, 18, 8, '#375f9c', '#222'),
 line('M9 27q12-7 10-3t11-3', '#222', 3) + pen(13, 18, 8, '#b0475f', '#4a3033'),
 turn + line('M9 22q3 5 6 3t15 2', '#222', 5, .75) + pen(11, 19, 13, '#448abb', '#3b4238', '#3b4238'),
 drop + `<circle cx="15" cy="24" r="7" fill="url(#mist)"/>` + line('M12 22q1 6 16 3', '#fff', 3, .5) + pen(15, 17, 7, '#d5d5d3', '#eee'),
 drop + `<circle cx="14" cy="24" r="8" fill="url(#mist)"/>` + line('M20 11L32-1', '#4a8fce', 4) + `<ellipse cx="19" cy="12" rx="3" ry="6" transform="rotate(42 19 12)" fill="#ececec" stroke="#aaa" stroke-width=".5"/>`,
 drop + `<path d="M6 18h5v5h5v3h4v-3h5v3h5v5H6z" fill="#fff"/><path d="M14 16v-4h3V8h4V4h4V0h6v7h-3v4h-4v4h-5v3z" fill="#b9b9b9" stroke="#ddd"/>`,
 drop + line('M17 18q-10-2-10 6 5 9 22-1', '#eee', 2.500) + pen(15, 18, 8, '#2b2b2b', '#333'),
 `<circle cx="3" cy="29" r="13" fill="url(#rain)"/>` + tiny + line('M20 12L31 1', '#222', 2.500) + line('M15 17l5-5M15 13l4 4', '#eee', 3),
 `<circle cx="6" cy="25" r="12" fill="url(#cream)"/>` + tiny + line('M20 12L31 1', '#222', 2.500) + '<path d="M17 8l2 4 5 0-3 3 1 5-5-2-4 2 0-5-2-3 4 0z" fill="#d3b455" stroke="#826a24"/>',
 `<path d="M13 9l7-9h11v17H20z" fill="#4a4a4a"/><path d="M13 9l7 4v5h-7z" fill="#222"/>` + tiny + line('M1 17h8', '#6bd', 3, .6),
 tiny + line('M20 10L31 0', '#222', 2.500) + '<circle cx="18" cy="12" r="6" fill="#4a4a40"/><circle cx="16" cy="10" r="2" fill="#888"/>' + line('M1 18h10', '#411', 4, .7),
 tiny + line('M20 10L31 0', '#222', 2.500) + '<circle cx="18" cy="12" r="6" fill="#4a4a40"/><path d="M18 12l4-4q4 8-4 10z" fill="#d6dcae"/>' + line('M1 18h10', '#411', 4, .7),
 '<circle cx="8" cy="8" r="2" stroke="#444" stroke-width="1.500"/><path d="M17 4h5v6l5 9H12l5-9z" fill="#a6c79c" stroke="#4c6048"/>',
 palette('#e2a02e'), palette('#3f8fd0'), palette('#45b58c')
];
document.getElementById('presets').innerHTML = art.map((a, i) => `<button aria-label="Preset ${i + 1}"><svg viewBox="0 0 31 31">${a}</svg></button>`).join('');

const sizes = [[4, 4], [5, 4], [6, 6], [7, 6], [8, 8], [10, 8], [12, 10], [14, 11], [16, 12], [20, 12], [24, 14], [30, 15], [40, 16], [50, 17], [60, 18], [80, 18], [100, 20], [200, 20]];
document.getElementById('sizes').innerHTML = sizes.map(([n, d]) => `<button><svg><circle cx="11" cy="11" r="${d / 2}"/></svg><span style="margin-top:1px">${n}</span></button>`).join('');
</script>
</body>
</html>
